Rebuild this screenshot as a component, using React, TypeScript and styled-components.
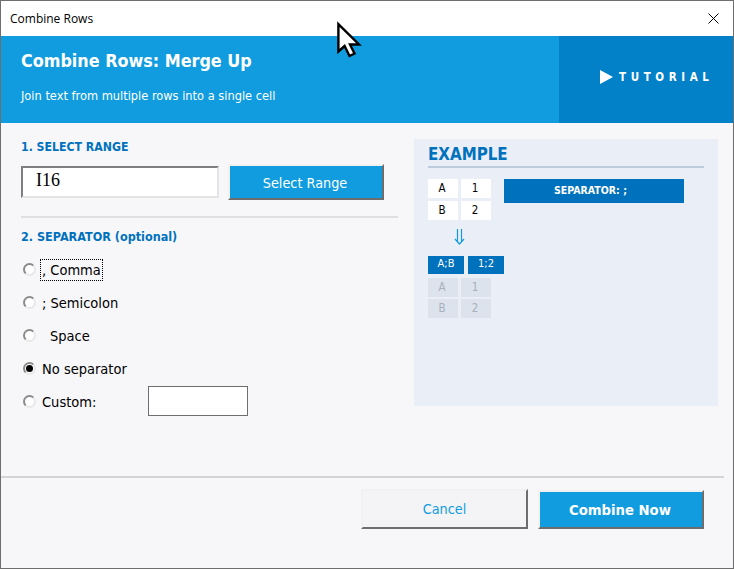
import React from "react";
import styled, { createGlobalStyle } from "styled-components";

const GlobalStyle = createGlobalStyle`
  html, body {
    margin: 0;
    padding: 0;
    background: #ffffff;
  }
`;

const FONT = `"DejaVu Sans Condensed", "DejaVu Sans", sans-serif`;
const BLUE = "#109cdf";
const DARK_BLUE = "#0071bc";

const Window = styled.div`
  position: relative;
  width: 734px;
  height: 569px;
  box-sizing: border-box;
  border: 1px solid #6e6e6e;
  display: flex;
  flex-direction: column;
  background: #f7f7fa;
  font-family: ${FONT};
  font-stretch: condensed;
  overflow: hidden;
`;

const TitleBar = styled.div`
  height: 35px;
  background: #ffffff;
  display: flex;
  align-items: center;
  justify-content: space-between;
  padding: 0 14px 0 9px;
  font-family: "Open Sans", sans-serif;
  font-stretch: normal;
  font-size: 12px;
  color: #000000;
`;

const Banner = styled.div`
  height: 87px;
  display: flex;
  background: ${BLUE};
  color: #ffffff;
`;

const BannerText = styled.div`
  flex: 1;
  padding: 14px 0 0 20px;
`;

const BannerTitle = styled.div`
  font-size: 17.8px;
  font-weight: 700;
  line-height: 22px;
`;

const BannerSub = styled.div`
  margin-top: 15px;
  font-size: 12.7px;
  line-height: 18px;
`;

const Tutorial = styled.div`
  width: 174px;
  background: #0281c8;
  display: flex;
  align-items: center;
  padding: 0 0 6px 41px;
  box-sizing: border-box;
  gap: 6px;
  font-size: 11.5px;
  font-weight: 700;
  letter-spacing: 4.6px;
`;

const Body = styled.div`
  flex: 1;
  display: flex;
  align-items: flex-start;
  padding: 16px 15px 0 20px;
  gap: 16px;
`;

const LeftColumn = styled.div`
  width: 377px;
  display: flex;
  flex-direction: column;
`;

const SectionLabel = styled.div`
  font-size: 12.2px;
  font-weight: 700;
  line-height: 16px;
  color: ${DARK_BLUE};
`;

const RangeRow = styled.div`
  margin-top: 9px;
  display: flex;
  align-items: center;
  gap: 9px;
  height: 36px;
`;

const RangeInput = styled.div`
  width: 198px;
  height: 32px;
  box-sizing: border-box;
  background: #ffffff;
  border: 2px solid;
  border-color: #7f7f7f #e4e4e4 #e4e4e4 #7f7f7f;
  padding-left: 13px;
  font-family: "Liberation Serif", serif;
  font-stretch: normal;
  font-size: 18px;
  line-height: 24px;
  color: #000000;
`;

const RaisedButton = styled.div<{ $primary?: boolean; $bold?: boolean }>`
  box-sizing: border-box;
  display: flex;
  align-items: center;
  justify-content: center;
  background: ${({ $primary }) => ($primary ? BLUE : "#f4f4f7")};
  color: ${({ $primary }) => ($primary ? "#ffffff" : BLUE)};
  font-weight: ${({ $bold }) => ($bold ? 700 : 400)};
  border-style: solid;
  border-color: #f1f1f1 #6d6d6d #6d6d6d #f1f1f1;
  border-width: 2px;
`;

const SelectButton = styled(RaisedButton)`
  width: 156px;
  height: 36px;
  padding: 1px 2px 0 0;
  font-size: 14.3px;
`;

const Divider = styled.div`
  height: 2px;
  background: #dfdfe3;
  margin-top: 16px;
`;

const SeparatorLabel = styled(SectionLabel)`
  margin-top: 12px;
  font-size: 12.5px;
  line-height: 14px;
`;

const RadioList = styled.div`
  margin-top: 9px;
  display: flex;
  flex-direction: column;
`;

const RadioRow = styled.div`
  height: 33px;
  display: flex;
  align-items: center;
  padding-left: 2px;
  font-size: 14.5px;
  color: #000000;
`;

const RadioMark = styled.span<{ $checked?: boolean }>`
  position: relative;
  width: 13px;
  height: 13px;
  box-sizing: border-box;
  border-radius: 50%;
  border: 2px solid;
  border-color: #8a8a8a #e8e8e8 #e8e8e8 #8a8a8a;
  background: #ffffff;
  margin: -1px 5px 0 0;
  flex: none;
  &::after {
    content: "";
    display: ${({ $checked }) => ($checked ? "block" : "none")};
    position: absolute;
    left: 1px;
    top: 1px;
    width: 7px;
    height: 7px;
    border-radius: 50%;
    background: #000000;
  }
`;

const RadioText = styled.span<{ $focused?: boolean; $indent?: number }>`
  padding: 0 1px;
  margin-left: ${({ $indent }) => $indent ?? 0}px;
  outline: ${({ $focused }) => ($focused ? "1px dotted #000000" : "none")};
  line-height: 20px;
`;

const CustomSpacer = styled.span`
  width: 107px;
  flex: none;
  display: flex;
  align-items: center;
`;

const CustomBox = styled.div`
  width: 100px;
  height: 30px;
  box-sizing: border-box;
  background: #ffffff;
  border: 1px solid #6e6e6e;
  margin-top: -1px;
`;

const ExamplePanel = styled.div`
  width: 304px;
  height: 267px;
  box-sizing: border-box;
  background: #eaeef7;
  padding: 4px 14px 0;
`;

const ExampleTitle = styled.div`
  font-size: 16.8px;
  font-weight: 700;
  line-height: 23px;
  color: ${DARK_BLUE};
  border-bottom: 2px solid #bdcbdd;
`;

const ExampleTop = styled.div`
  margin-top: 11px;
  display: flex;
  gap: 13px;
  align-items: flex-start;
`;

const CellGrid = styled.div`
  display: grid;
  grid-template-columns: 30px 30px;
  grid-auto-rows: 19px;
  gap: 3px;
`;

const Cell = styled.div<{ $muted?: boolean }>`
  display: flex;
  align-items: center;
  justify-content: center;
  padding: 0 2px 2px 0;
  box-sizing: border-box;
  font-size: 11.5px;
  background: ${({ $muted }) => ($muted ? "#dce3ec" : "#ffffff")};
  color: ${({ $muted }) => ($muted ? "#a8afba" : "#000000")};
`;

const SeparatorBadge = styled.div`
  width: 180px;
  height: 24px;
  background: ${DARK_BLUE};
  color: #ffffff;
  font-size: 10.5px;
  font-weight: 700;
  display: flex;
  align-items: center;
  justify-content: center;
  padding: 0 7px 2px 0;
  box-sizing: border-box;
`;

const ArrowBox = styled.div`
  width: 62px;
  height: 36px;
  display: flex;
  align-items: center;
  justify-content: center;
  padding-bottom: 3px;
  box-sizing: border-box;
`;

const ResultRow = styled.div`
  display: flex;
  gap: 4px;
`;

const ResultCell = styled.div`
  width: 36px;
  height: 18px;
  background: ${DARK_BLUE};
  color: #ffffff;
  font-size: 11px;
  display: flex;
  align-items: center;
  justify-content: center;
  padding-bottom: 3px;
  box-sizing: border-box;
`;

const MutedGrid = styled(CellGrid)`
  margin-top: 4px;
  row-gap: 2px;
`;

const Footer = styled.div`
  height: 92px;
  border-top: 2px solid #d4d4d8;
  margin-right: 9px;
  box-sizing: border-box;
  display: flex;
  justify-content: flex-end;
  gap: 10px;
  padding: 11px 20px 0 0;
`;

const CancelButton = styled(RaisedButton)`
  width: 167px;
  height: 40px;
  font-size: 14.3px;
`;

const CombineButton = styled(RaisedButton)`
  width: 166px;
  height: 39px;
  margin-top: 1px;
  padding-right: 2px;
  font-size: 14.7px;
`;

const Cursor = styled.svg`
  position: absolute;
  left: 334px;
  top: 19px;
`;

const App: React.FC = () => (
  <>
    <GlobalStyle />
    <Window>
      <TitleBar>
        <span>Combine Rows</span>
        <svg width="11" height="11" viewBox="0 0 11 11">
          <path d="M0.5 0.5 L10.5 10.5 M10.5 0.5 L0.5 10.5" stroke="#000" strokeWidth="1" fill="none" />
        </svg>
      </TitleBar>
      <Banner>
        <BannerText>
          <BannerTitle>Combine Rows: Merge Up</BannerTitle>
          <BannerSub>Join text from multiple rows into a single cell</BannerSub>
        </BannerText>
        <Tutorial>
          <svg width="13" height="14" viewBox="0 0 13 14">
            <path d="M0 0 L13 7 L0 14 Z" fill="#fff" />
          </svg>
          <span>TUTORIAL</span>
        </Tutorial>
      </Banner>
      <Body>
        <LeftColumn>
          <SectionLabel>1. SELECT RANGE</SectionLabel>
          <RangeRow>
            <RangeInput>I16</RangeInput>
            <SelectButton $primary>Select Range</SelectButton>
          </RangeRow>
          <Divider />
          <SeparatorLabel>2. SEPARATOR (optional)</SeparatorLabel>
          <RadioList>
            <RadioRow>
              <RadioMark />
              <RadioText $focused>, Comma</RadioText>
            </RadioRow>
            <RadioRow>
              <RadioMark />
              <RadioText>; Semicolon</RadioText>
            </RadioRow>
            <RadioRow>
              <RadioMark />
              <RadioText $indent={8}>Space</RadioText>
            </RadioRow>
            <RadioRow>
              <RadioMark $checked />
              <RadioText>No separator</RadioText>
            </RadioRow>
            <RadioRow>
              <RadioMark />
              <CustomSpacer>
                <RadioText>Custom:</RadioText>
              </CustomSpacer>
              <CustomBox />
            </RadioRow>
          </RadioList>
        </LeftColumn>
        <ExamplePanel>
          <ExampleTitle>EXAMPLE</ExampleTitle>
          <ExampleTop>
            <CellGrid>
              <Cell>A</Cell>
              <Cell>1</Cell>
              <Cell>B</Cell>
              <Cell>2</Cell>
            </CellGrid>
            <SeparatorBadge>SEPARATOR: ;</SeparatorBadge>
          </ExampleTop>
          <ArrowBox>
            <svg width="11" height="16" viewBox="0 0 11 16">
              <path d="M3.5 0 V12 M7.5 0 V12 M1 10 L5.5 15 L10 10" stroke={BLUE} strokeWidth="1.2" fill="none" />
            </svg>
          </ArrowBox>
          <ResultRow>
            <ResultCell>A;B</ResultCell>
            <ResultCell>1;2</ResultCell>
          </ResultRow>
          <MutedGrid>
            <Cell $muted>A</Cell>
            <Cell $muted>1</Cell>
            <Cell $muted>B</Cell>
            <Cell $muted>2</Cell>
          </MutedGrid>
        </ExamplePanel>
      </Body>
      <Footer>
        <CancelButton>Cancel</CancelButton>
        <CombineButton $primary $bold>Combine Now</CombineButton>
      </Footer>
      <Cursor width="30" height="40" viewBox="0 0 30 40">
        <path d="M3.4 4.2 L3.4 31.5 L9.6 26 L14.5 36 L19.5 33.5 L15 24.5 L24 24.5 Z" fill="#fff" stroke="#000" strokeWidth="2.4" strokeLinejoin="miter" />
      </Cursor>
    </Window>
  </>
);

export default App;
